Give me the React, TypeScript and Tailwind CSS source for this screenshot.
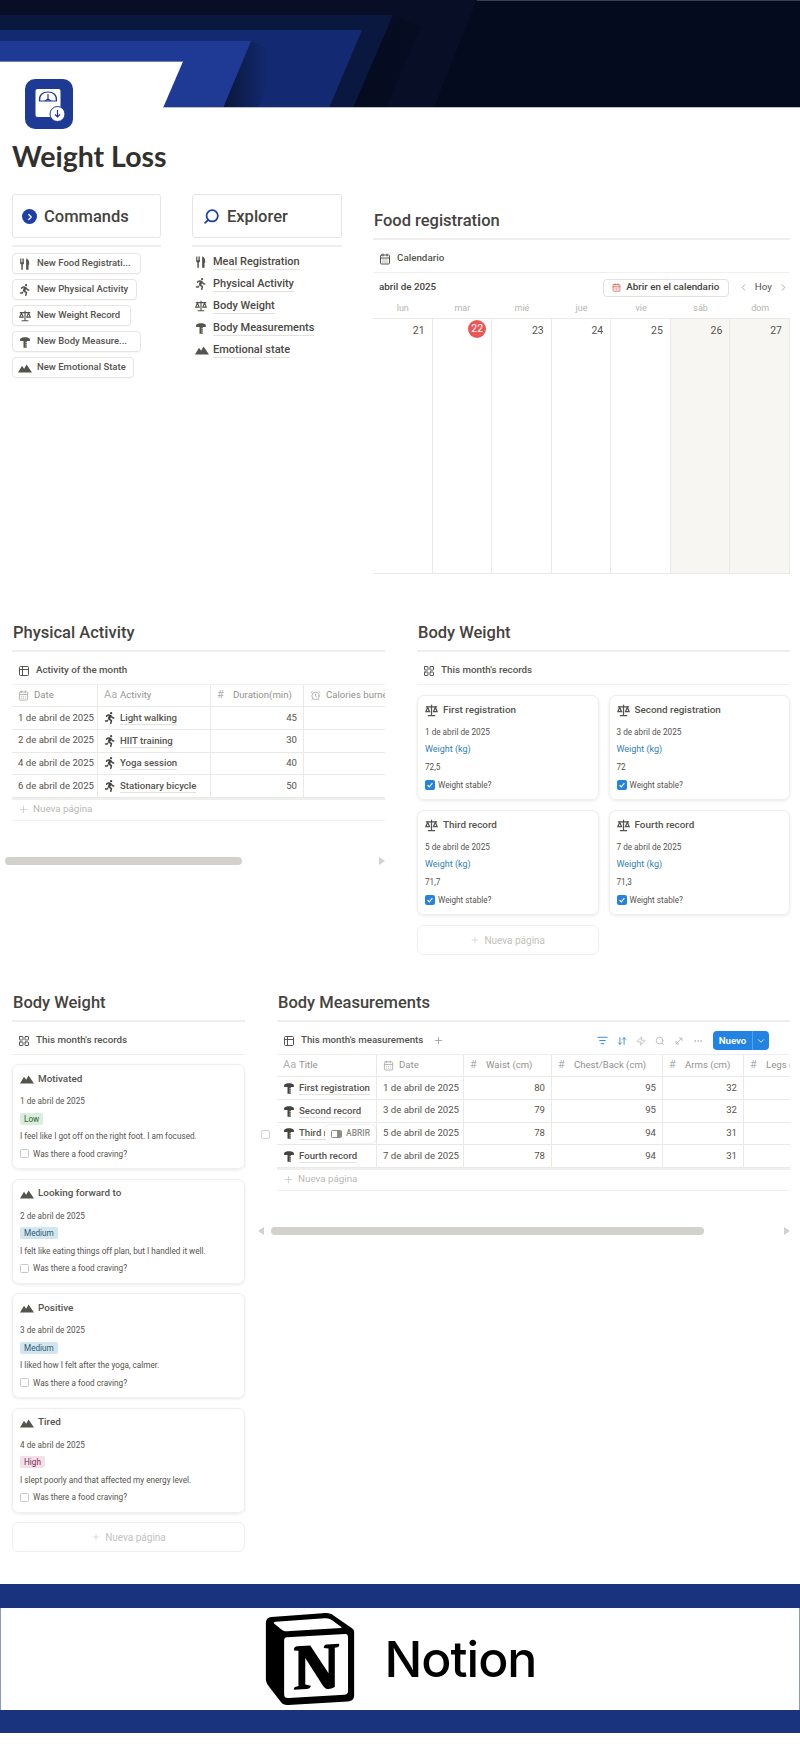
import { ReactNode } from 'react';
import { AlarmClock, ArrowDownUp, CalendarDays, ChevronDown, ChevronLeft, ChevronRight, Ellipsis, LayoutGrid, ListFilter, MoveDiagonal, Plus, Search, Table2, Zap } from 'lucide-react';
import { FaPersonRunning } from 'react-icons/fa6';
import { SiNotion } from 'react-icons/si';

type IconProps = { className?: string };

function ForkKnife({ className = 'w-[13px] h-[13px]' }: IconProps) {
    return (
        <svg viewBox="0 0 16 16" fill="currentColor" className={className}>
            <path d="M1.5 0.5v6c0 1.1.7 1.8 1.6 2.1V15.500h2V8.600C6 8.300 6.700 7.600 6.700 6.500v-6H5.600v5H4.700v-5H3.500v5H2.600v-5z" />
            <path d="M9.500 0.800C12 1.200 13.600 3.500 13.600 7v2h-.9v6.500H9.500z" />
        </svg>
    );
}

function Scales({ className = 'w-[14px] h-[14px]' }: IconProps) {
    return (
        <svg viewBox="0 0 16 16" fill="none" stroke="currentColor" strokeWidth="1.500" className={className}>
            <path d="M1 3.500h14M8 1v12.500M3.500 14.300h9" />
            <path d="M3.300 4 1 9.500h4.600zM12.700 4 10.400 9.500H15z" />
        </svg>
    );
}

function Measure({ className = 'w-[14px] h-[14px]' }: IconProps) {
    return (
        <svg viewBox="0 0 16 16" fill="currentColor" className={className}>
            <path d="M1.500 4C3 1 13 1 14.500 4v2.500H10.500V15.500H6V6.500H1.500z" />
            <path d="M8.500 8.500h2.200M8.500 11h2.200M8.500 13.500h2.200" stroke="#fff" strokeWidth="0.900" />
        </svg>
    );
}

function Mountains({ className = 'w-[14px] h-[14px]' }: IconProps) {
    return (
        <svg viewBox="0 0 16 16" fill="currentColor" className={className}>
            <path d="M0 13 4.600 5.300 7 8.800 9.800 4 16 13z" />
        </svg>
    );
}

function LogoIcon() {
    return (
        <svg viewBox="0 0 48 50" className="w-[48px] h-[50px]">
            <rect width="48" height="50" rx="10" fill="#1e3a94" />
            <rect x="10.500" y="10" width="25" height="28" rx="2" fill="#fff" />
            <path d="M14.500 22c-.5-6 3-9 8.500-9s9 3 8.500 9z" fill="none" stroke="#1e3a94" strokeWidth="1.200" />
            <path d="M23 15v7M23 20l-3 2M23 20l3 2" fill="none" stroke="#1e3a94" strokeWidth="1.200" />
            <circle cx="32.500" cy="35" r="7.500" fill="#fff" stroke="#1e3a94" strokeWidth="1" />
            <path d="M32.500 31v7M30 35.500l2.500 2.500 2.500-2.500" fill="none" stroke="#1e3a94" strokeWidth="1.200" />
        </svg>
    );
}

function Banner() {
    return (
        <svg viewBox="0 0 800 108" className="block w-[800px] h-[108px]" preserveAspectRatio="none">
            <defs>
                <linearGradient id="shadeB" x1="0" x2="1" y1="0" y2="0">
                    <stop offset="0" stopColor="#02040c" />
                    <stop offset="1" stopColor="#060c22" />
                </linearGradient>
                <linearGradient id="shadeC" x1="0" x2="1" y1="0" y2="0">
                    <stop offset="0" stopColor="#0b1638" />
                    <stop offset="0.800" stopColor="#122a72" />
                </linearGradient>
            </defs>
            <rect width="800" height="108" fill="#050b1e" />
            <rect width="800" height="1" fill="#3a4050" />
            <path d="M0 0H477L434 108H0z" fill="#070e25" />
            <path d="M0 15H393L421 27 386 108H320V15z" fill="url(#shadeB)" />
            <path d="M0 15H393L353 108H0z" fill="#0a1840" />
            <path d="M0 30H362L329 108H0z" fill="#132a73" />
            <path d="M251 41 280 54 258 108H223z" fill="url(#shadeC)" />
            <path d="M0 41H251L223 108H0z" fill="#1e3a94" />
            <path d="M0 61.500H183L163 108H0z" fill="#fff" />
            <rect y="107" x="163" width="637" height="1" fill="#b9bdc9" />
            <rect y="61" width="183" height="1" fill="#6d7fb8" />
        </svg>
    );
}

function SectionTitle({ children }: { children: ReactNode }) {
    return (
        <div className="h-[34px] flex items-center pl-[1px] border-b-2 border-[#efeeec] box-content text-[16.500px] font-medium text-[#45433e]">
            {children}
        </div>
    );
}

function ViewRow({ icon, label }: { icon: ReactNode; label: string }) {
    return (
        <div className="h-[33px] pt-[5px] pl-[6px] flex items-center gap-[6px] border-b border-[#efefed] text-[9.800px] font-medium text-[#55534e]">
            <span className="text-[#55534e]">{icon}</span>
            {label}
        </div>
    );
}

function Action({ icon, label, width }: { icon: ReactNode; label: string; width: string }) {
    return (
        <div className={`h-[21px] ${width} flex items-center border border-[#e6e5e3] rounded-[4px] shadow-[0_1px_1px_rgba(0,0,0,0.03)] text-[9.500px] font-medium text-[#55534e] whitespace-nowrap`}>
            <span className="w-[24px] shrink-0 flex justify-center text-[#55534e]">{icon}</span>
            {label}
        </div>
    );
}

function ExplorerLink({ icon, label }: { icon: ReactNode; label: string }) {
    return (
        <div className="h-[22px] flex items-center text-[11px] font-medium text-[#4b4943]">
            <span className="w-[21px] pl-[3px] text-[#55534e]">{icon}</span>
            <span className="border-b border-[#e3e2df] leading-[14px]">{label}</span>
        </div>
    );
}

function Cell({ children, right, last }: { children?: ReactNode; right?: boolean; last?: boolean }) {
    return (
        <div className={`h-full flex items-center px-[6px] overflow-hidden whitespace-nowrap ${right ? 'justify-end' : ''} ${last ? '' : 'border-r border-[#e9e9e7]'}`}>
            {children}
        </div>
    );
}

function HeadCell({ icon, label, last }: { icon: ReactNode; label: string; last?: boolean }) {
    return (
        <Cell last={last}>
            <span className="w-[16px] shrink-0 text-[#b0afab] text-[11px] flex">{icon}</span>
            <span className="text-[#93928e]">{label}</span>
        </Cell>
    );
}

function RowTitle({ icon, label }: { icon: ReactNode; label: string }) {
    return (
        <>
            <span className="w-[16px] shrink-0 text-[#45433e] flex">{icon}</span>
            <span className="font-medium text-[#55534e] border-b border-[#e3e2df] leading-[13px]">{label}</span>
        </>
    );
}

function NewRow() {
    return (
        <div className="h-[23px] pb-[2px] flex items-center gap-[4px] pl-[6px] border-t-2 border-[#efefed] border-b text-[9.800px] text-[#b9b8b4]">
            <Plus className="w-[11px] h-[11px]" strokeWidth={1.300} />
            Nueva página
        </div>
    );
}

function Card({ icon, title, children }: { icon: ReactNode; title: string; children: ReactNode }) {
    return (
        <div className="h-[105px] pt-[5px] px-[7px] rounded-[7px] border border-[#efefed] shadow-[0_1px_3px_rgba(0,0,0,0.09)] text-[8.200px] text-[#55534e] whitespace-nowrap">
            <div className="h-[18px] mb-[4.500px] flex items-center text-[9.900px] font-medium">
                <span className="w-[18px] text-[#55534e]">{icon}</span>
                {title}
            </div>
            {children}
        </div>
    );
}

function Line({ children }: { children: ReactNode }) {
    return <div className="h-[17.500px] flex items-center">{children}</div>;
}

function CheckLine({ checked, label }: { checked?: boolean; label: string }) {
    return (
        <Line>
            {checked ? (
                <span className="w-[10px] h-[10px] mr-[3px] rounded-[2px] bg-[#2383e2] flex items-center justify-center">
                    <svg viewBox="0 0 10 10" className="w-[8px] h-[8px]" fill="none" stroke="#fff" strokeWidth="1.500">
                        <path d="M2 5.200 4.200 7.400 8 2.800" />
                    </svg>
                </span>
            ) : (
                <span className="w-[9px] h-[9px] mr-[4px] rounded-[1.500px] border border-[#c9c8c5]" />
            )}
            {label}
        </Line>
    );
}

function NewCard() {
    return (
        <div className="h-[30px] flex items-center justify-center gap-[4px] rounded-[6px] border border-[#efefed] text-[10px] text-[#c3c2be]">
            <Plus className="w-[10px] h-[10px]" strokeWidth={1.300} />
            Nueva página
        </div>
    );
}

const weightRecords = [
    { title: 'First registration', date: '1 de abril de 2025', kg: '72,5' },
    { title: 'Second registration', date: '3 de abril de 2025', kg: '72' },
    { title: 'Third record', date: '5 de abril de 2025', kg: '71,7' },
    { title: 'Fourth record', date: '7 de abril de 2025', kg: '71,3' },
];

const moods = [
    { title: 'Motivated', date: '1 de abril de 2025', level: 'Low', pill: 'bg-[#dbeddb] text-[#2f5e3a]', note: 'I feel like I got off on the right foot. I am focused.' },
    { title: 'Looking forward to', date: '2 de abril de 2025', level: 'Medium', pill: 'bg-[#d3e5ef] text-[#2b5a75]', note: 'I felt like eating things off plan, but I handled it well.' },
    { title: 'Positive', date: '3 de abril de 2025', level: 'Medium', pill: 'bg-[#d3e5ef] text-[#2b5a75]', note: 'I liked how I felt after the yoga, calmer.' },
    { title: 'Tired', date: '4 de abril de 2025', level: 'High', pill: 'bg-[#f5e0e9] text-[#7a2e55]', note: 'I slept poorly and that affected my energy level.' },
];

const activities = [
    { date: '1 de abril de 2025', name: 'Light walking', min: 45 },
    { date: '2 de abril de 2025', name: 'HIIT training', min: 30 },
    { date: '4 de abril de 2025', name: 'Yoga session', min: 40 },
    { date: '6 de abril de 2025', name: 'Stationary bicycle', min: 50 },
];

const measurements = [
    { title: 'First registration', date: '1 de abril de 2025', waist: 80, chest: 95, arms: 32 },
    { title: 'Second record', date: '3 de abril de 2025', waist: 79, chest: 95, arms: 32 },
    { title: 'Third record', date: '5 de abril de 2025', waist: 78, chest: 94, arms: 31 },
    { title: 'Fourth record', date: '7 de abril de 2025', waist: 78, chest: 94, arms: 31 },
];

const week = [
    { name: 'lun', day: 21 },
    { name: 'mar', day: 22, today: true },
    { name: 'mié', day: 23 },
    { name: 'jue', day: 24 },
    { name: 'vie', day: 25 },
    { name: 'sáb', day: 26, weekend: true },
    { name: 'dom', day: 27, weekend: true },
];

const smallIcon = 'w-[12px] h-[12px]';
const activityCols = 'grid grid-cols-[86px_113px_93px_120px]';
const measureCols = 'grid grid-cols-[100px_87px_88px_111px_81px_81px]';

export default function App() {
    return (
        <div className="w-[800px] h-[1745px] overflow-hidden bg-white font-['Roboto',sans-serif] text-[#37352f]">
            <Banner />

            <div className="relative -mt-[29px] ml-[25px] w-[48px]">
                <LogoIcon />
            </div>
            <h1 className="mt-[10px] ml-[12px] h-[34px] flex items-center font-['Lato',sans-serif] text-[28.500px] font-bold text-[#32302c]">Weight Loss</h1>

            {/* Commands, explorer, calendar */}
            <div className="mt-[21px] pl-[12px] flex gap-[31px]">
                <div className="w-[149px]">
                    <div className="h-[44px] pt-[1px] flex items-center gap-[7px] pl-[9px] border border-[#e6e5e3] rounded-[3px] text-[16.500px] font-medium text-[#45433e]">
                        <span className="w-[15px] h-[15px] rounded-full bg-[#1e3fa8] flex items-center justify-center">
                            <ChevronRight className="w-[10px] h-[10px] text-white" strokeWidth={3} />
                        </span>
                        <span className="mt-[1px]">Commands</span>
                    </div>
                    <div className="mt-[7px] mb-[6px] h-[2px] bg-[#efeeec]" />
                    <div className="flex flex-col gap-[5px]">
                        <Action icon={<ForkKnife className={smallIcon} />} label="New Food Registrati..." width="w-[129px]" />
                        <Action icon={<FaPersonRunning className={smallIcon} />} label="New Physical Activity" width="w-[125px]" />
                        <Action icon={<Scales className={smallIcon} />} label="New Weight Record" width="w-[119px]" />
                        <Action icon={<Measure className={smallIcon} />} label="New Body Measure..." width="w-[129px]" />
                        <Action icon={<Mountains className="w-[14px] h-[14px]" />} label="New Emotional State" width="w-[122px]" />
                    </div>
                </div>

                <div className="w-[150px]">
                    <div className="h-[44px] pt-[1px] flex items-center gap-[7px] pl-[10px] border border-[#e6e5e3] rounded-[3px] text-[16.500px] font-medium text-[#45433e]">
                        <Search className="w-[17px] h-[17px] text-[#1e3fa8] -scale-x-100" strokeWidth={2.500} />
                        <span className="mt-[1px]">Explorer</span>
                    </div>
                    <div className="mt-[7px] mb-[4px] h-[2px] bg-[#efeeec]" />
                    <ExplorerLink icon={<ForkKnife className={smallIcon} />} label="Meal Registration" />
                    <ExplorerLink icon={<FaPersonRunning className={smallIcon} />} label="Physical Activity" />
                    <ExplorerLink icon={<Scales className={smallIcon} />} label="Body Weight" />
                    <ExplorerLink icon={<Measure className={smallIcon} />} label="Body Measurements" />
                    <ExplorerLink icon={<Mountains className="w-[14px] h-[14px]" />} label="Emotional state" />
                </div>

                <div className="w-[417px] mt-[10px]">
                    <SectionTitle>Food registration</SectionTitle>
                    <ViewRow icon={<CalendarDays className="w-[12px] h-[12px]" />} label="Calendario" />
                    <div className="h-[27px] pt-[2px] flex items-center pl-[6px] text-[9.800px] font-medium text-[#45433e]">
                        abril de 2025
                        <div className="ml-auto mr-[9px] w-[126px] h-[18px] flex items-center justify-center gap-[5px] border border-[#e3e2df] rounded-[4px]">
                            <CalendarDays className="w-[9px] h-[9px] text-[#d9594c]" />
                            Abrir en el calendario
                        </div>
                        <ChevronLeft className="w-[11px] h-[11px] text-[#a5a4a0]" />
                        <span className="mx-[6px] text-[#55534e] font-normal">Hoy</span>
                        <ChevronRight className="w-[11px] h-[11px] text-[#a5a4a0] mr-[1px]" />
                    </div>
                    <div className="grid grid-cols-7 h-[18px] items-center text-center text-[9px] text-[#b5b4b0]">
                        {week.map(d => <span key={d.name}>{d.name}</span>)}
                    </div>
                    <div className="grid grid-cols-7 h-[256px] border-y border-[#e9e9e7]">
                        {week.map(d => (
                            <div key={d.day} className={`flex justify-end pt-[1px] pr-[7px] border-r border-[#e9e9e7] text-[10.500px] text-[#55534e] ${d.weekend ? 'bg-[#f7f6f3]' : ''}`}>
                                {d.today ? (
                                    <span className="-mr-[2px] w-[18px] h-[18px] rounded-full bg-[#eb5757] text-white flex items-center justify-center">{d.day}</span>
                                ) : (
                                    <span className="leading-[22px]">{d.day}</span>
                                )}
                            </div>
                        ))}
                    </div>
                </div>
            </div>

            {/* Activity table and weight gallery */}
            <div className="mt-[42px] pl-[12px] flex gap-[32px]">
                <div className="w-[373px]">
                    <SectionTitle>Physical Activity</SectionTitle>
                    <ViewRow icon={<Table2 className={smallIcon} />} label="Activity of the month" />
                    <div className="text-[9.600px] text-[#55534e] overflow-hidden">
                        <div className={`${activityCols} h-[22px] border-b border-[#e9e9e7]`}>
                            <HeadCell icon={<CalendarDays className="w-[11px] h-[11px]" />} label="Date" />
                            <HeadCell icon={<span>Aa</span>} label="Activity" />
                            <HeadCell icon={<span>#</span>} label="Duration(min)" />
                            <HeadCell icon={<AlarmClock className="w-[11px] h-[11px]" />} label="Calories burned" last />
                        </div>
                        {activities.map(a => (
                            <div key={a.name} className={`${activityCols} h-[22.750px] border-b border-[#e9e9e7]`}>
                                <Cell>{a.date}</Cell>
                                <Cell><RowTitle icon={<FaPersonRunning className={smallIcon} />} label={a.name} /></Cell>
                                <Cell right>{a.min}</Cell>
                                <Cell last />
                            </div>
                        ))}
                        <NewRow />
                    </div>
                    <div className="-ml-[7px] w-[380px] mt-[36px] flex items-center justify-between">
                        <div className="w-[237px] h-[8px] rounded-full bg-[#d3d1cb]" />
                        <div className="w-0 h-0 border-y-[4px] border-y-transparent border-l-[6px] border-l-[#d3d1cb]" />
                    </div>
                </div>

                <div className="w-[373px]">
                    <SectionTitle>Body Weight</SectionTitle>
                    <ViewRow icon={<LayoutGrid className={smallIcon} />} label="This month's records" />
                    <div className="mt-[10px] grid grid-cols-2 gap-x-[10px] gap-y-[10px]">
                        {weightRecords.map(r => (
                            <Card key={r.title} icon={<Scales className="w-[13px] h-[13px]" />} title={r.title}>
                                <Line>{r.date}</Line>
                                <Line><span className="text-[9px] text-[#2f7fb5]">Weight (kg)</span></Line>
                                <Line>{r.kg}</Line>
                                <CheckLine checked label="Weight stable?" />
                            </Card>
                        ))}
                        <NewCard />
                    </div>
                </div>
            </div>

            {/* Mood gallery and measurements table */}
            <div className="mt-[31px] pl-[12px] flex gap-[32px]">
                <div className="w-[233px]">
                    <SectionTitle>Body Weight</SectionTitle>
                    <ViewRow icon={<LayoutGrid className={smallIcon} />} label="This month's records" />
                    <div className="mt-[9px] flex flex-col gap-[9.500px]">
                        {moods.map(m => (
                            <Card key={m.title} icon={<Mountains className="w-[14px] h-[14px]" />} title={m.title}>
                                <Line>{m.date}</Line>
                                <Line><span className={`h-[12px] px-[4px] flex items-center rounded-[2px] ${m.pill}`}>{m.level}</span></Line>
                                <Line>{m.note}</Line>
                                <CheckLine label="Was there a food craving?" />
                            </Card>
                        ))}
                        <NewCard />
                    </div>
                </div>

                <div className="w-[513px]">
                    <SectionTitle>Body Measurements</SectionTitle>
                    <div className="h-[33px] pt-[5px] pl-[6px] pr-[21px] flex items-center border-b border-[#efefed] text-[9.700px] font-medium text-[#55534e]">
                        <Table2 className="w-[12px] h-[12px] mr-[6px]" />
                        This month's measurements
                        <Plus className="w-[11px] h-[11px] ml-[10px] text-[#a5a4a0]" />
                        <div className="ml-auto flex items-center gap-[9px] text-[#b5b4b0]">
                            <ListFilter className="w-[11px] h-[11px] text-[#2383e2]" />
                            <ArrowDownUp className="w-[10px] h-[10px] text-[#2383e2]" />
                            <Zap className="w-[10px] h-[10px]" />
                            <Search className="w-[10px] h-[10px]" />
                            <MoveDiagonal className="w-[10px] h-[10px]" />
                            <Ellipsis className="w-[10px] h-[10px]" />
                            <div className="w-[56px] h-[19px] ml-[1px] flex items-center rounded-[4px] bg-[#2383e2] text-white font-semibold">
                                <span className="w-[40px] text-center leading-[19px] border-r border-[#5aa2ea]">Nuevo</span>
                                <ChevronDown className="w-[10px] h-[10px] mx-[3px]" />
                            </div>
                        </div>
                    </div>
                    <div className="relative text-[9.600px] text-[#55534e] overflow-visible">
                        <div className={`${measureCols} h-[22px] border-b border-[#e9e9e7] overflow-hidden`}>
                            <HeadCell icon={<span>Aa</span>} label="Title" />
                            <HeadCell icon={<CalendarDays className="w-[11px] h-[11px]" />} label="Date" />
                            <HeadCell icon={<span>#</span>} label="Waist (cm)" />
                            <HeadCell icon={<span>#</span>} label="Chest/Back (cm)" />
                            <HeadCell icon={<span>#</span>} label="Arms (cm)" />
                            <HeadCell icon={<span>#</span>} label="Legs (cm)" last />
                        </div>
                        {measurements.map((m, i) => (
                            <div key={m.title} className={`${measureCols} relative h-[22.750px] border-b border-[#e9e9e7]`}>
                                <Cell><RowTitle icon={<Measure className="w-[12px] h-[12px]" />} label={m.title} /></Cell>
                                <Cell>{m.date}</Cell>
                                <Cell right>{m.waist}</Cell>
                                <Cell right>{m.chest}</Cell>
                                <Cell right>{m.arms}</Cell>
                                <Cell last />
                                {i === 2 && (
                                    <>
                                        <span className="absolute -left-[16px] top-[7px] w-[9px] h-[9px] rounded-[2px] border border-[#d3d1cb]" />
                                        <span className="absolute left-[48px] top-[2px] h-[18px] px-[6px] flex items-center gap-[4px] bg-white rounded-[5px] shadow-[0_0_2px_rgba(0,0,0,0.18)] text-[8.500px] font-medium text-[#8c8b87]">
                                            <span className="w-[11px] h-[8px] rounded-[1.500px] border border-[#8c8b87] flex justify-end">
                                                <span className="w-[4px] h-full bg-[#8c8b87]" />
                                            </span>
                                            ABRIR
                                        </span>
                                    </>
                                )}
                            </div>
                        ))}
                        <NewRow />
                    </div>
                    <div className="-ml-[19px] w-[532px] mt-[36px] flex items-center justify-between">
                        <div className="w-0 h-0 border-y-[4px] border-y-transparent border-r-[6px] border-r-[#d3d1cb]" />
                        <div className="ml-[7px] w-[433px] h-[8px] rounded-full bg-[#d3d1cb]" />
                        <div className="ml-auto w-0 h-0 border-y-[4px] border-y-transparent border-l-[6px] border-l-[#d3d1cb]" />
                    </div>
                </div>
            </div>

            {/* Footer */}
            <div className="mt-[32px]">
                <div className="h-[24px] bg-[#1a337f]" />
                <div className="h-[102px] flex items-center justify-center gap-[29px] border-x border-[#8a9bc9] text-black">
                    <SiNotion className="w-[92px] h-[96px]" />
                    <span className="font-['Inter',sans-serif] text-[50px] font-medium tracking-[-1px]">Notion</span>
                </div>
                <div className="h-[23px] bg-[#1a337f]" />
            </div>
        </div>
    );
}
